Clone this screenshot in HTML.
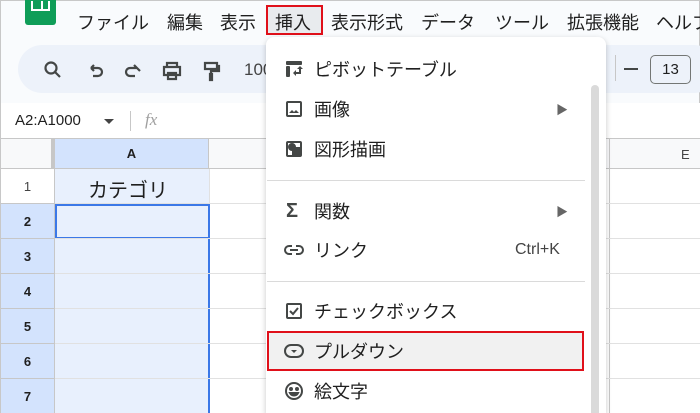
<!DOCTYPE html>
<html style="width:700px;height:413px;overflow:hidden"><head><meta charset="utf-8"><style>
*{margin:0;padding:0;box-sizing:border-box}
body{width:700px;height:413px;overflow:hidden;background:#f9fbfd;font-family:"Liberation Sans","Noto Sans CJK JP",sans-serif;color:#1f1f1f;position:relative;border:1px solid #c8c8c8}
.a{position:absolute;white-space:nowrap}
.mb{top:8px;font-size:18px;color:#1f1f1f}
.mi{position:absolute;left:0;width:100%;height:40px;display:flex;align-items:center;font-size:18px;white-space:nowrap}
.mi .ic{position:absolute;left:18px;top:10px;width:20px;height:20px}
.mi .t{position:absolute;left:48px}
.rh{position:absolute;left:0;width:54px;height:35px;background:#d3e3fd;border-bottom:1px solid #c7c7c7;border-right:1px solid #c7c7c7;font-size:13px;font-weight:bold;color:#1f1f1f;display:flex;align-items:center;justify-content:center}
</style></head><body>
<div class="a" style="left:24px;top:-6px;width:31px;height:30px;background:#0f9d58;border-radius:3px"></div>
<div class="a" style="left:30px;top:0px;width:19px;height:10px;border:2px solid #fff;border-top:none;background:linear-gradient(90deg,transparent 8px,#fff 8px,#fff 10px,transparent 10px)"></div>
<div class="a mb" style="left:76px">ファイル</div>
<div class="a mb" style="left:166px">編集</div>
<div class="a mb" style="left:219px">表示</div>
<div class="a" style="left:265px;top:4px;width:57px;height:30px;border:2px solid #e0101a;background:#e8ebee"></div>
<div class="a mb" style="left:274px">挿入</div>
<div class="a mb" style="left:330px">表示形式</div>
<div class="a mb" style="left:420px">データ</div>
<div class="a mb" style="left:494px">ツール</div>
<div class="a mb" style="left:566px">拡張機能</div>
<div class="a mb" style="left:655px">ヘルプ</div>
<div class="a" style="left:17px;top:44px;width:700px;height:48px;background:#edf2fa;border-radius:24px"></div>
<svg class="a" style="left:40px;top:58px" width="220" height="24" viewBox="0 0 220 24" fill="none" stroke="#444746" stroke-width="2.2">
<circle cx="10" cy="9" r="5.5"/><path d="M14 13l5 5"/>
<path d="M50 9h7a4 4 0 010 8h-5M50 9l3-3M50 9l3 3"/>
<path d="M96 9h-7a4 4 0 000 8h5M96 9l-3-3M96 9l3 3"/>
<path d="M126 8V4h10v4M123 8h16v8h-16zM127 14h8v6h-8z"/>
<path d="M164 4h12v6h-12zM176 7h2v5h-8v3M169 15h2v6h-2z"/>
</svg>
<div class="a" style="left:243px;top:59px;font-size:17px;color:#444">100</div>
<div class="a" style="left:614px;top:54px;width:1px;height:26px;background:#c7c7c7"></div>
<div class="a" style="left:623px;top:67px;width:14px;height:2px;background:#444746"></div>
<div class="a" style="left:649px;top:54px;width:41px;height:29px;border:1px solid #747775;border-radius:5px;font-size:15px;text-align:center;line-height:27px">13</div>
<div class="a" style="left:0;top:102px;width:700px;height:36px;background:#fff;border-bottom:1px solid #c7c7c7"></div>
<div class="a" style="left:14px;top:111px;font-size:15px">A2:A1000</div>
<div class="a" style="left:103px;top:118px;border:5px solid transparent;border-top:5px solid #444"></div>
<div class="a" style="left:129px;top:110px;width:1px;height:20px;background:#c7c7c7"></div>
<div class="a" style="left:144px;top:109px;font-size:17px;font-style:italic;color:#a0a0a0;font-family:'Liberation Serif',serif">fx</div>
<div class="a" style="left:0;top:138px;width:700px;height:275px;background:#fff"></div>
<div class="a" style="left:0;top:138px;width:54px;height:30px;background:#f8f9fa;border-right:4px solid #c7c7c7;border-bottom:1px solid #c7c7c7"></div>
<div class="a" style="left:54px;top:138px;width:154px;height:30px;background:#d3e3fd;border-bottom:1px solid #c7c7c7;border-right:1px solid #c7c7c7;font-size:13px;font-weight:bold;text-align:center;line-height:30px">A</div>
<div class="a" style="left:208px;top:138px;width:492px;height:30px;background:#f8f9fa;border-bottom:1px solid #c7c7c7"></div>
<div class="a" style="left:608px;top:138px;width:1px;height:275px;background:#c7c7c7"></div>
<div class="a" style="left:680px;top:146px;font-size:13px;color:#444">E</div>
<div class="a" style="left:54px;top:168px;width:154px;height:245px;background:#e8f0fd"></div>
<div class="a" style="left:207px;top:203px;width:2px;height:210px;background:#3b78e7"></div>
<div class="a" style="left:54px;top:203px;width:155px;height:35px;border:2px solid #3b78e7"></div>
<div class="rh" style="top:168px;background:#fff;font-weight:normal;color:#444">1</div>
<div class="rh" style="top:203px">2</div>
<div class="rh" style="top:238px">3</div>
<div class="rh" style="top:273px">4</div>
<div class="rh" style="top:308px">5</div>
<div class="rh" style="top:343px">6</div>
<div class="rh" style="top:378px">7</div>
<div class="a" style="left:54px;top:202px;width:646px;height:1px;background:#e1e1e1"></div>
<div class="a" style="left:54px;top:237px;width:646px;height:1px;background:#e1e1e1"></div>
<div class="a" style="left:54px;top:272px;width:646px;height:1px;background:#e1e1e1"></div>
<div class="a" style="left:54px;top:307px;width:646px;height:1px;background:#e1e1e1"></div>
<div class="a" style="left:54px;top:342px;width:646px;height:1px;background:#e1e1e1"></div>
<div class="a" style="left:54px;top:377px;width:646px;height:1px;background:#e1e1e1"></div>
<div class="a" style="left:208px;top:168px;width:1px;height:35px;background:#e1e1e1"></div>
<div class="a" style="left:87px;top:173px;font-size:20px">カテゴリ</div>
<div class="a" style="left:265px;top:36px;width:340px;height:377px;background:#fff;border-radius:8px 8px 0 0;box-shadow:0 2px 6px rgba(0,0,0,.22);overflow:hidden">
<div class="a" style="left:325px;top:48px;width:8px;height:340px;background:#dadada;border-radius:4px"></div>
<div class="mi" style="top:12px"><svg class="ic" viewBox="0 0 20 20" fill="#444746"><rect x="2" y="2" width="16" height="4" rx="1"/><rect x="2" y="7" width="4" height="11" rx="1"/><path d="M9 14l3-3v2h3v-3h-2l3-3 3 3h-2v5h-5v2z"/></svg><span class="t">ピボットテーブル</span></div>
<div class="mi" style="top:52px"><svg class="ic" viewBox="0 0 20 20" fill="none" stroke="#444746" stroke-width="2"><rect x="3" y="3" width="14" height="14" rx="1"/><path d="M5 14l3-3 2 2 2-2 3 3z" fill="#444746" stroke="none"/></svg><span class="t">画像</span><span style="position:absolute;left:290px;font-size:12px;color:#666">▶</span></div>
<div class="mi" style="top:92px"><svg class="ic" viewBox="0 0 20 20" fill="none" stroke="#444746" stroke-width="2"><rect x="3" y="3" width="14" height="14" rx="1"/><circle cx="8" cy="8" r="3" fill="#444746"/><rect x="9" y="9" width="6" height="6" fill="#444746"/></svg><span class="t">図形描画</span></div>
<div class="a" style="left:1px;top:143px;width:318px;height:1px;background:#dadada"></div>
<div class="mi" style="top:154px"><span class="ic" style="font-size:20px;font-weight:bold;color:#444746;line-height:20px;left:20px">Σ</span><span class="t">関数</span><span style="position:absolute;left:290px;font-size:12px;color:#666">▶</span></div>
<div class="mi" style="top:193px"><svg class="ic" viewBox="0 0 20 20" fill="none" stroke="#444746" stroke-width="2"><path d="M8 6H5a4 4 0 000 8h3M12 6h3a4 4 0 010 8h-3M6 10h8"/></svg><span class="t">リンク</span><span style="position:absolute;left:249px;font-size:16px;color:#444">Ctrl+K</span></div>
<div class="a" style="left:1px;top:244px;width:318px;height:1px;background:#dadada"></div>
<div class="mi" style="top:254px"><svg class="ic" viewBox="0 0 20 20" fill="none" stroke="#444746" stroke-width="2"><rect x="3" y="3" width="14" height="14" rx="1"/><path d="M6 10l3 3 5-6"/></svg><span class="t">チェックボックス</span></div>
<div class="a" style="left:1px;top:294px;width:317px;height:40px;background:#f1f1f1;border:2px solid #e0101a"></div>
<div class="mi" style="top:294px"><svg class="ic" viewBox="0 0 20 20" fill="none" stroke="#444746" stroke-width="2"><rect x="1" y="4" width="18" height="12" rx="6"/><path d="M7 9h6l-3 3z" fill="#444746" stroke="none"/></svg><span class="t">プルダウン</span></div>
<div class="mi" style="top:334px"><svg class="ic" viewBox="0 0 20 20" fill="none" stroke="#444746" stroke-width="2"><circle cx="10" cy="10" r="8"/><circle cx="7" cy="8" r="1" fill="#444746"/><circle cx="13" cy="8" r="1" fill="#444746"/><path d="M6 12a4.5 4.5 0 008 0z" fill="#444746"/></svg><span class="t">絵文字</span></div>
</div>
</body></html>
